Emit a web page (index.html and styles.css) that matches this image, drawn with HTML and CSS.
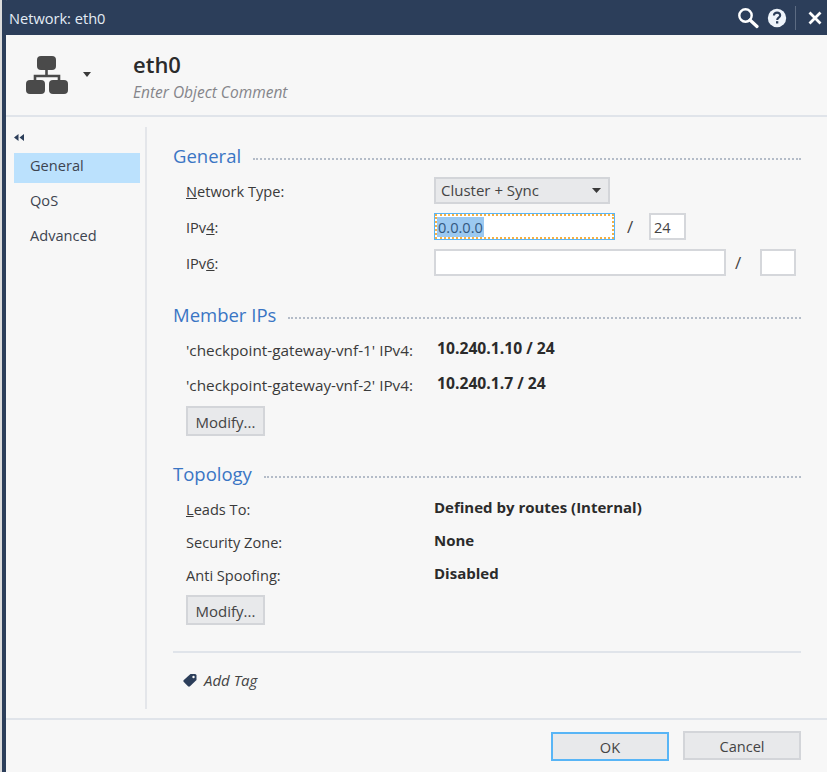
FILE: index.html
```html
<!DOCTYPE html>
<html lang="en">
<head>
    <meta charset="UTF-8">
    <meta name="viewport" content="width=device-width, initial-scale=1.0">
    <title>Network: eth0</title>
    <link rel="stylesheet" href="styles.css">
</head>
<body>
    <div class="window">
        <header class="titlebar">
            <span class="titlebar-text">Network: eth0</span>
            <div class="titlebar-icons">
                <svg class="icon-search" width="22" height="22" viewBox="0 0 22 22">
                    <circle cx="8.5" cy="8.5" r="6.2" fill="none" stroke="#fff" stroke-width="2.4"/>
                    <path d="M13 13l7 6.5" stroke="#fff" stroke-width="3.2" stroke-linecap="round"/>
                </svg>
                <svg class="icon-help" width="20" height="20" viewBox="0 0 20 20">
                    <circle cx="10" cy="10" r="9.2" fill="#eef4fb"/>
                    <path d="M6.9 7.6c0-1.9 1.4-3 3.2-3s3.1 1.1 3.1 2.7c0 2.4-3 2.3-3 4.6" fill="none" stroke="#2c3e5a" stroke-width="2.1"/>
                    <rect x="9" y="13.2" width="2.3" height="2.3" fill="#2c3e5a"/>
                </svg>
                <span class="titlebar-sep"></span>
                <svg class="icon-close" width="14" height="14" viewBox="0 0 14 14">
                    <path d="M1.5 1.5l11 11M12.5 1.5l-11 11" stroke="#fff" stroke-width="2.8"/>
                </svg>
            </div>
        </header>

        <section class="object-head">
            <svg class="object-icon" width="42" height="38" viewBox="0 0 42 38">
                <rect x="11" y="0" width="19" height="14" rx="4" fill="#4a4a4a"/>
                <path d="M20.5 13v7M9 27v-7h24v7" fill="none" stroke="#4a4a4a" stroke-width="2.6"/>
                <rect x="0" y="24" width="19" height="14" rx="4" fill="#4a4a4a"/>
                <rect x="23" y="24" width="19" height="14" rx="4" fill="#4a4a4a"/>
            </svg>
            <svg class="object-caret" width="8" height="5" viewBox="0 0 8 5"><path d="M0 0h8L4 5z" fill="#3a3a3a"/></svg>
            <div class="object-name">
                <h1>eth0</h1>
                <p>Enter Object Comment</p>
            </div>
        </section>

        <div class="dialog-body">
            <nav class="side-nav">
                <svg class="collapse" width="10" height="7" viewBox="0 0 10 7"><path d="M4.5 0v7L0 3.500zM10 0v7L5.500 3.500z" fill="#2c3e5a"/></svg>
                <a class="nav-item active" href="#">General</a>
                <a class="nav-item" href="#">QoS</a>
                <a class="nav-item" href="#">Advanced</a>
            </nav>

            <main class="content">
                <div class="section-title"><h2>General</h2><span class="dots"></span></div>
                <div class="form-rows">
                    <div class="form-row">
                        <label><u>N</u>etwork Type:</label>
                        <div class="select">Cluster + Sync
                            <svg width="9" height="5" viewBox="0 0 9 5"><path d="M0 0h9L4.500 5z" fill="#3a3a3a"/></svg>
                        </div>
                    </div>
                    <div class="form-row">
                        <label>IPv<u>4</u>:</label>
                        <div class="field field-focus">
                            <div class="focus-ring"><span class="selected">0.0.0.0</span></div>
                        </div>
                        <span class="slash slash-v4">/</span>
                        <input class="field mask" type="text" value="24">
                    </div>
                    <div class="form-row">
                        <label>IPv<u>6</u>:</label>
                        <input class="field field-v6" type="text">
                        <span class="slash slash-v6">/</span>
                        <input class="field mask mask-v6" type="text">
                    </div>
                </div>

                <div class="section-title section-gap first-gap"><h2>Member IPs</h2><span class="dots"></span></div>
                <div class="info-rows member-rows">
                    <div class="info-row"><span class="info-label">'checkpoint-gateway-vnf-1' IPv4:</span><b class="member-value">10.240.1.10 / 24</b></div>
                    <div class="info-row"><span class="info-label">'checkpoint-gateway-vnf-2' IPv4:</span><b class="member-value">10.240.1.7 / 24</b></div>
                </div>
                <button class="btn btn-modify" type="button">Modify...</button>

                <div class="section-title section-gap"><h2>Topology</h2><span class="dots"></span></div>
                <div class="info-rows topology-rows">
                    <div class="info-row"><span class="info-label"><u>L</u>eads To:</span><b>Defined by routes (Internal)</b></div>
                    <div class="info-row"><span class="info-label">Security Zone:</span><b>None</b></div>
                    <div class="info-row"><span class="info-label">Anti Spoofing:</span><b>Disabled</b></div>
                </div>
                <button class="btn btn-modify btn-modify-low" type="button">Modify...</button>

                <hr class="divider">

                <div class="add-tag">
                    <svg width="14" height="14" viewBox="0 0 14 14">
                        <path d="M7.500 1H12a1.500 1.500 0 0 1 1.500 1.500V7L7 13.200a1.500 1.500 0 0 1-2 0L.8 9a1.500 1.500 0 0 1 0-2z" fill="#2c3e5a"/>
                        <circle cx="10.500" cy="4" r="1.200" fill="#f7f7f7"/>
                    </svg>
                    <span>Add Tag</span>
                </div>
            </main>
        </div>

        <footer class="dialog-footer">
            <button class="btn btn-ok" type="button">OK</button>
            <button class="btn btn-cancel" type="button">Cancel</button>
        </footer>
    </div>
</body>
</html>
```

FILE: styles.css
```css
* {
    box-sizing: border-box;
}

html, body {
    height: 100%;
}

body {
    margin: 0;
    background-color: #dcdcdc;
    color: #333;
    font-family: "Open Sans", "Noto Sans", sans-serif;
    font-size: 14.6px;
    overflow: hidden;
}

.window {
    display: flex;
    flex-direction: column;
    height: 772px;
    margin-left: 2px;
    background-color: #f7f7f7;
    border-left: 4px solid #2c3e5a;
}

/* title bar */
.titlebar {
    display: flex;
    align-items: center;
    justify-content: space-between;
    height: 35px;
    margin-left: -4px;
    padding: 0 5px 0 7px;
    background-color: #2c3e5a;
    border-top-left-radius: 5px;
    color: #e4ecf5;
}

.titlebar-text {
    font-size: 14.6px;
}

.titlebar-icons {
    display: flex;
    align-items: center;
}

.icon-help {
    margin-left: 8px;
}

.titlebar-sep {
    width: 1px;
    height: 24px;
    margin: 0 12px 0 8px;
    background-color: #5c6b82;
}

/* object header */
.object-head {
    display: flex;
    align-items: flex-start;
    height: 82px;
    border-bottom: 2px solid #e0e4ea;
}

.object-icon {
    margin: 21px 0 0 20px;
}

.object-caret {
    margin: 37px 0 0 15px;
}

.object-name {
    margin-left: 42px;
}

.object-name h1 {
    margin: 14px 0 0;
    font-size: 22px;
    font-weight: 600;
    line-height: 30px;
    color: #2b2b2b;
}

.object-name p {
    margin: 1px 0 0;
    font-size: 15.5px;
    font-style: italic;
    line-height: 24px;
    color: #85858a;
}

/* dialog body */
.dialog-body {
    display: flex;
    height: 601px;
    padding: 10px 0 9px;
}

.side-nav {
    display: flex;
    flex-direction: column;
    width: 139px;
    padding: 7px 5px 0 8px;
}

.collapse {
    margin-bottom: 12px;
}

.nav-item {
    height: 30px;
    margin-bottom: 5px;
    padding-left: 16px;
    color: #3d4450;
    line-height: 24px;
    text-decoration: none;
}

.nav-item.active {
    background-color: #bbe1fd;
}

.content {
    flex: 1;
    padding: 17px 26px 0 26px;
    border-left: 2px solid #e4e6ea;
}

.section-title {
    display: flex;
    align-items: center;
    height: 24px;
}

.section-title h2 {
    margin: -2px 12px 0 0;
    color: #3a75c4;
    font-size: 18.5px;
    font-weight: 400;
}

.dots {
    flex: 1;
    margin-top: 6px;
    border-top: 2px dotted #b4bcc8;
}

.section-gap {
    margin-top: 26px;
}

.first-gap {
    margin-top: 27px;
}

/* form rows */
.form-rows {
    display: flex;
    flex-direction: column;
    gap: 9px;
    margin-top: 9px;
}

.form-row {
    display: flex;
    align-items: center;
    height: 27px;
    padding-left: 13px;
}

.form-row label {
    width: 248px;
    color: #3a3a3a;
}

.select {
    display: flex;
    align-items: center;
    justify-content: space-between;
    width: 176px;
    height: 27px;
    padding: 0 7px 2px 5px;
    background-color: #e8e9eb;
    border: 2px solid #d3d5d9;
    color: #444;
    font-size: 15px;
}

.select svg {
    margin-top: 2px;
}

.field {
    height: 27px;
    padding: 0 3px;
    background-color: #fff;
    border: 2px solid #d5d7db;
    color: #444;
    font: inherit;
}

.field-focus {
    width: 181px;
    padding: 0;
    border-width: 1px;
    border-color: #58b5f6;
}

.focus-ring {
    display: flex;
    align-items: center;
    height: 100%;
    padding-left: 0;
    border: 2px dotted #f5b042;
}

.selected {
    background-color: #9cc9f0;
    color: #33587f;
    padding: 0 1px;
}

.field-v6 {
    width: 292px;
}

.mask {
    width: 37px;
}

.mask-v6 {
    width: 36px;
}

.slash {
    width: 34px;
    text-align: center;
    color: #444;
    font-size: 17px;
}

.slash-v4 {
    padding-right: 4px;
}

.slash-v6 {
    padding-right: 10px;
}

/* read only rows */
.info-rows {
    display: flex;
    flex-direction: column;
    padding-left: 13px;
}

.member-rows {
    gap: 11px;
    margin-top: 11px;
}

.member-rows .info-label {
    font-size: 15.3px;
}

.topology-rows {
    gap: 9px;
    margin-top: 11px;
}

.info-row {
    display: flex;
    align-items: flex-start;
    height: 24px;
}

.info-label {
    width: 248px;
    color: #3a3a3a;
    line-height: 24px;
}

.info-row b {
    color: #2b2b2b;
    font-size: 15px;
    font-weight: 700;
    line-height: 20px;
}

.info-row .member-value {
    margin-left: 3px;
    font-size: 15.7px;
}

/* buttons */
.btn {
    display: block;
    background-color: #e8e9eb;
    border: 2px solid #d3d5d9;
    color: #444;
    font: inherit;
    padding: 1px 0 0;
}

.btn-modify {
    width: 79px;
    height: 30px;
    margin: 9px 0 0 13px;
    font-size: 15px;
}

.btn-modify-low {
    margin-top: 8px;
}

.divider {
    height: 2px;
    margin: 26px 0 0;
    background-color: #e0e4ea;
    border: 0;
}

.add-tag {
    display: flex;
    align-items: center;
    gap: 7px;
    height: 24px;
    margin: 15px 0 0 10px;
    color: #444;
    font-size: 15px;
    font-style: italic;
}

/* footer */
.dialog-footer {
    display: flex;
    align-items: flex-start;
    justify-content: flex-end;
    gap: 14px;
    height: 54px;
    padding: 11px 26px 0 0;
    border-top: 2px solid #e0e4ea;
}

.btn-ok, .btn-cancel {
    width: 118px;
    height: 29px;
}

.btn-ok {
    margin-top: 1px;
    border-color: #58b5f6;
}
```
